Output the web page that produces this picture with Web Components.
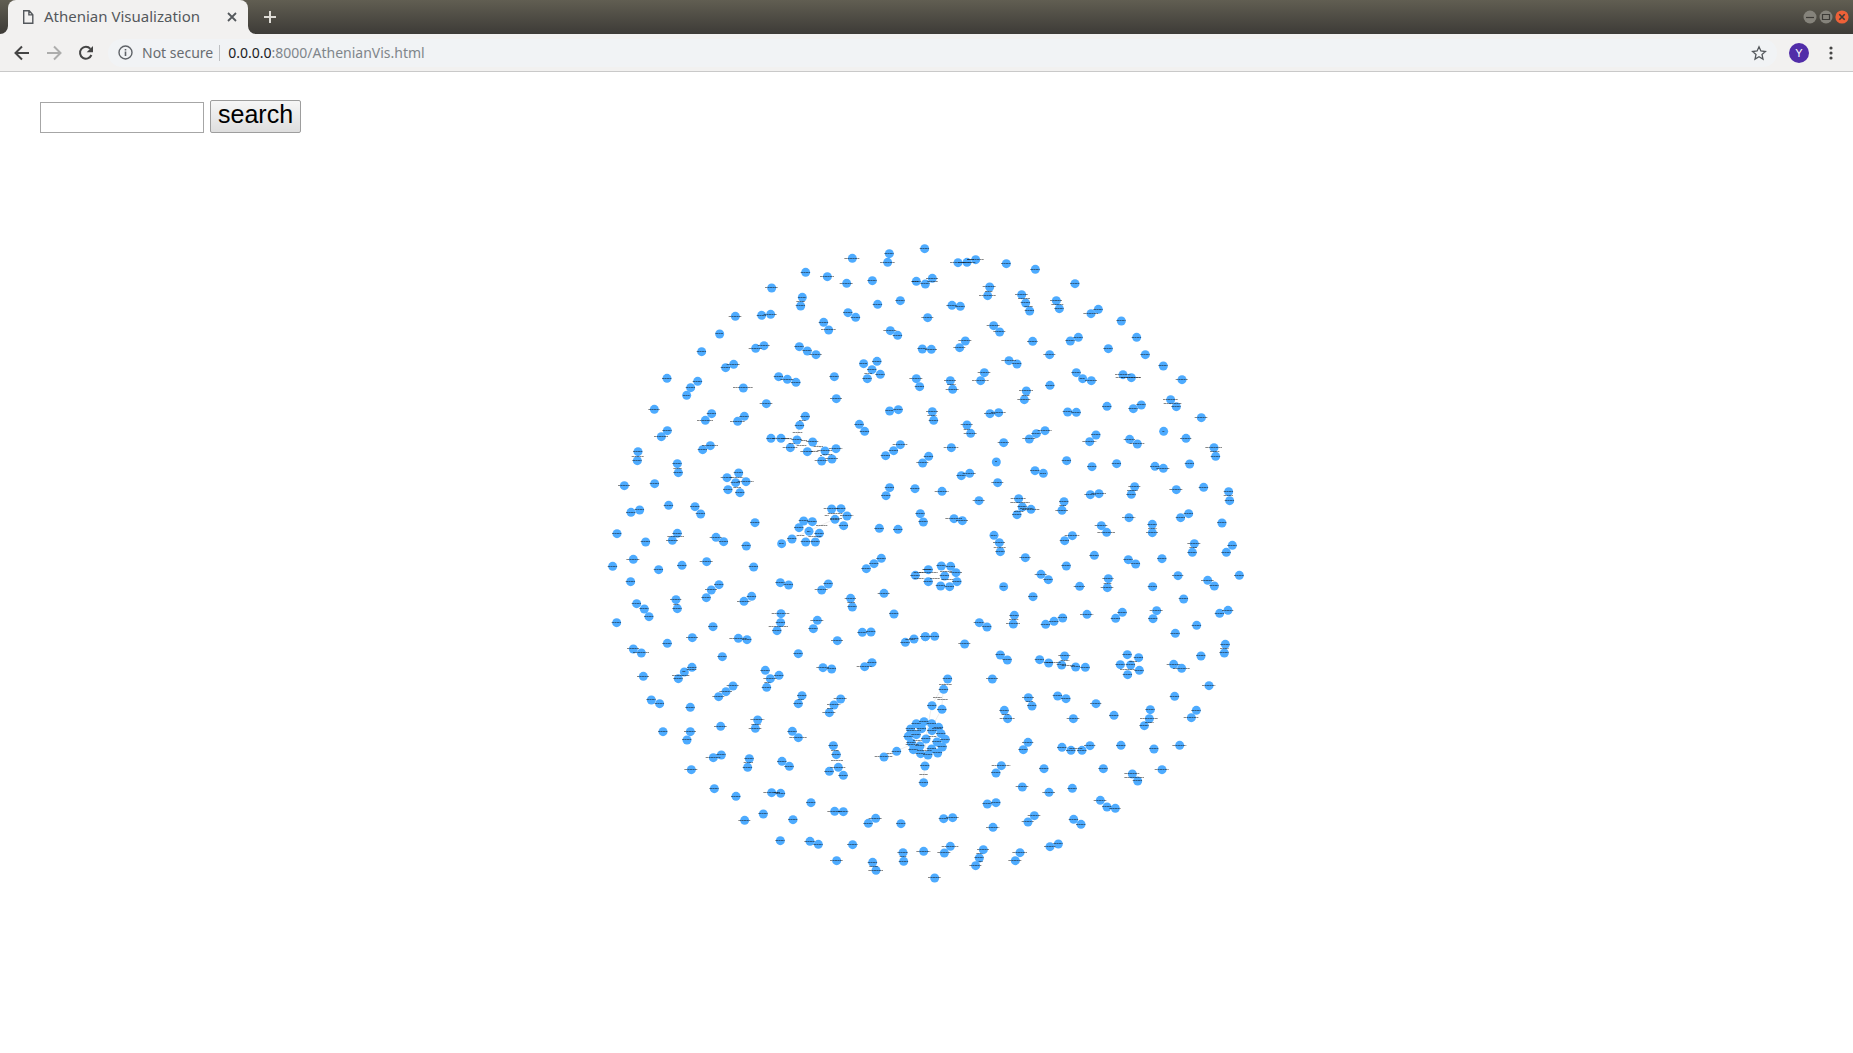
<!DOCTYPE html>
<html lang="en">
<head>
<meta charset="utf-8">
<title>Athenian Visualization</title>
<style>
html, body { margin: 0; height: 100%; background: #fff; }
body { display: flex; flex-direction: column; overflow: hidden; font-family: "Noto Sans", "Open Sans", sans-serif; }
page-view { flex: 1; }
</style>
</head>
<body>
<tab-strip><span>Athenian Visualization</span></tab-strip>
<browser-toolbar><span slot="host">0.0.0.0</span><span slot="path">:8000/AthenianVis.html</span></browser-toolbar>
<page-view><search-form></search-form><node-graph></node-graph></page-view>

<script>
class BaseElement extends HTMLElement {
  constructor() {
    super();
    this.attachShadow({ mode: 'open' }).innerHTML = this.constructor.markup;
  }
}

class TabStrip extends BaseElement {
  static markup = `
<style>
:host { display: flex; height: 34px; background: linear-gradient(#615e52, #3d3b37); color: #54585c; }
svg { display: block; flex: none; }
button { border: 0; padding: 0; background: none; display: flex; align-items: center; justify-content: center; }
.curve { align-self: flex-end; fill: #f2f1f0; }
.tab { box-sizing: border-box; width: 240px; height: 34px; padding: 0 9px 0 14px; background: #f2f1f0; border-radius: 8px 8px 0 0; display: flex; align-items: center; font-size: 15px; line-height: 20px; }
.title { flex: 1; padding: 0 0 2px 10px; white-space: nowrap; }
.new { width: 28px; }
.window { margin-left: auto; padding-right: 4px; display: flex; align-items: center; gap: 2px; }
.window button { width: 14px; height: 34px; }
</style>
<svg class="curve" width="8" height="8"><path d="M8 0v8H0a8 8 0 0 0 8-8z"/></svg>
<div class="tab">
  <svg width="12" height="16" viewBox="0 0 12 16" fill="none" stroke="#54585c" stroke-width="1.4"><path d="M1.7 1.7h5.5l3.6 4v8.6H1.7zM6.9 1.7v4.2h3.9"/></svg>
  <span class="title"><slot></slot></span>
  <button aria-label="Close tab"><svg width="14" height="14" viewBox="0 0 14 14" stroke="#54585c" stroke-width="1.8"><path d="M3 3l8 8M11 3l-8 8"/></svg></button>
</div>
<svg class="curve" width="8" height="8"><path d="M0 0v8h8a8 8 0 0 1-8-8z"/></svg>
<button class="new" aria-label="New tab"><svg width="14" height="14" viewBox="0 0 14 14" stroke="#dedcd6" stroke-width="2"><path d="M7 1v12M1 7h12"/></svg></button>
<div class="window">
  <button aria-label="Minimize"><svg width="14" height="14" viewBox="0 0 14 14"><circle cx="7" cy="7" r="6.5" fill="#85837b"/><path d="M3 7.5h8" stroke="#3c3b37" stroke-width="1.2"/></svg></button>
  <button aria-label="Maximize"><svg width="14" height="14" viewBox="0 0 14 14"><circle cx="7" cy="7" r="6.5" fill="#85837b"/><path d="M3.5 4.5h7v5h-7z" fill="none" stroke="#3c3b37" stroke-width="1.2"/></svg></button>
  <button aria-label="Close"><svg width="14" height="14" viewBox="0 0 14 14"><circle cx="7" cy="7" r="6.6" fill="#ee6138"/><path d="M4.3 4.3l5.4 5.4M9.7 4.3l-5.4 5.4" stroke="#3c3b37" stroke-width="1.6"/></svg></button>
</div>`;
}

class BrowserToolbar extends BaseElement {
  static markup = `
<style>
:host { display: flex; box-sizing: border-box; height: 38px; padding: 0 8px; align-items: center; background: #f2f1f0; border-bottom: 1px solid #c9c9c9; }
svg { display: block; flex: none; }
button { border: 0; padding: 0; background: none; width: 28px; height: 28px; display: flex; align-items: center; justify-content: center; flex: none; }
nav { display: flex; gap: 4px; }
.bar { flex: 1; box-sizing: border-box; height: 28px; margin: 0 8px; padding: 0 4px 0 10px; border-radius: 14px; background: #f1f3f5; display: flex; align-items: center; font-size: 14px; line-height: 20px; color: #686c70; white-space: nowrap; }
.note { padding: 0 6px 0 9px; }
.url { flex: 1; border-left: 1px solid #bdbfc2; height: 16px; line-height: 16px; padding-left: 8px; display: flex; align-items: center; outline: 0; }
.host { color: #202124; }
.path { color: #80868b; }
.avatar b { width: 20px; height: 20px; border-radius: 50%; background: #512da8; color: #fff; font-size: 11px; line-height: 20px; font-weight: 400; }
.menu { margin-left: 4px; }
</style>
<nav>
  <button aria-label="Back"><svg width="16" height="16" viewBox="0 0 16 16" fill="none" stroke="#454545" stroke-width="2"><path d="M15 8H2.5M8 1.5L1.5 8L8 14.5"/></svg></button>
  <button aria-label="Forward"><svg width="16" height="16" viewBox="0 0 16 16" fill="none" stroke="#adadac" stroke-width="2"><path d="M1 8h12.5M8 1.5L14.5 8L8 14.5"/></svg></button>
  <button aria-label="Reload"><svg width="16" height="16" viewBox="0 0 16 16"><path d="M13.4 10A5.9 5.9 0 1 1 12.4 3.9" fill="none" stroke="#454545" stroke-width="2"/><path d="M15 1v6.3H8.7z" fill="#454545"/></svg></button>
</nav>
<div class="bar">
  <svg width="15" height="15" viewBox="0 0 15 15"><circle cx="7.5" cy="7.5" r="6.5" fill="none" stroke="#5f6368" stroke-width="1.4"/><path d="M7.5 6.6v4.4M7.5 4v1.5" stroke="#5f6368" stroke-width="1.6"/></svg>
  <span class="note">Not secure</span>
  <div class="url" role="textbox" contenteditable="true" spellcheck="false" aria-label="Address"><span class="host"><slot name="host"></slot></span><span class="path"><slot name="path"></slot></span></div>
  <button aria-label="Bookmark"><svg width="16" height="16" viewBox="0 0 16 16"><path d="M8 1.8l1.9 4.2 4.5.5-3.4 3 1 4.6L8 11.8l-4 2.3 1-4.6-3.4-3 4.5-.5z" fill="none" stroke="#54585c" stroke-width="1.3"/></svg></button>
</div>
<button class="avatar" aria-label="Profile"><b>Y</b></button>
<button class="menu" aria-label="Menu"><svg width="4" height="14" viewBox="0 0 4 14" fill="#454545"><circle cx="2" cy="2" r="1.6"/><circle cx="2" cy="7" r="1.6"/><circle cx="2" cy="12" r="1.6"/></svg></button>`;
}

class PageView extends BaseElement {
  static markup = `
<style>:host { display: flex; flex-direction: column; min-height: 0; }</style>
<slot></slot>`;
}

class SearchForm extends BaseElement {
  static markup = `
<style>
:host { display: block; padding: 28px 40px 8px; font-family: "Liberation Sans", Arial, sans-serif; }
form { display: flex; align-items: flex-end; gap: 6px; height: 33px; margin: 0; }
input { box-sizing: border-box; width: 164px; height: 31px; border: 1px solid #a6a6a6; background: #fff; padding: 2px; font: 24px "Liberation Sans", sans-serif; outline: 0; }
button { box-sizing: border-box; height: 33px; padding: 0 7px 5px; border: 1px solid #9d9d9d; border-radius: 2px; background: linear-gradient(#f6f6f6, #dedede); color: #000; font: 25px/26px "Liberation Sans", sans-serif; }
</style>
<form onsubmit="return false"><input type="text" aria-label="Search term"><button>search</button></form>`;
}

/* Each sector has an origin and lists of "x,y[,halfLabelWidth]" in graph units (3 per CSS pixel). */
const SECTORS = [
  { at: [1800, 282],
    nodes: `756,69,23 867,55 862,81,22 616,111 681,124,21 739,144,20 816,136 514,158,19 606,186,12 601,212 405,243,19 484,240 511,237,20 358,296,12 304,349 670,261 685,284,22 743,232 766,246 832,207 900,196 948,138 870,286,20 892,300 466,339,20 491,331,18 376,397 400,387,20 597,334 621,347 647,358,18 790,385,12 830,378 815,403 840,417 801,430 200,429 292,438 271,457 259,480,10 535,424 561,432,20 587,441 702,424 429,458,30 708,490,18 498,505,19 162,522,17 334,535 315,555,24 432,543 412,558,22 948,430,20 958,454 868,527,12 894,523 777,567 793,588 201,586 183,604,21 330,631,24 307,643 900,628,22 880,646`,
    labels: `602,200,13 805,416,12 945,139,9` },
  { at: [2760, 282],
    nodes: `13,40 113,82,23 140,81 166,73,25 258,85,15 345,102 464,145 36,129,18 15,146 208,155,20 202,181,25 304,178,19 316,203 328,227 408,196,18 417,220 95,210,16 120,213 22,247,18 534,222 512,235,22 603,257 220,271,20 238,290,18 135,317,20 118,337,18 337,318,16 474,306 450,317 649,306 564,340 388,358,18 675,358 6,341 33,342,18 266,376,22 290,386 729,392 192,412,19 181,436,25 90,436,18 97,462,20 468,412 487,430,8 513,436,18 608,418,23 633,427,30 785,433,18 318,467,21 312,493,20 389,450 751,493,22 768,514 560,513 639,520 663,509 36,529,18 40,555 209,535,17 235,532,22 442,530 468,531 843,547,19 140,569,18 151,594,20 730,588,3 797,609,17 374,586,21 348,595 327,611,20 527,599 508,619,21 250,622,17 628,612,17 651,626,22`,
    labels: `206,168,11 312,190,18 326,214,13 412,208,18 94,448,13 317,480,12 758,505,27 36,542,14 625,427,38 140,582,9 38,139,16 152,73,10 140,82,26` },
  { at: [2250, 807],
    nodes: `165,18 148,45 62,84,13 92,84,25 140,89,16 187,95,18 120,112,22 171,124,20 224,122,22 257,115,20 245,146,19 214,152,20`,
    labels: `157,31,10 143,67,15 110,86,16 162,91,9 155,106,15 205,109,14 194,125,12 233,133,15 213,136,3 125,101,9`,
    links: `140,89,187,95 62,84,140,89 171,124,224,122 187,95,224,122 140,89,120,112 148,45,140,89` },
  { at: [1800, 912],
    nodes: `113,19 111,46 231,55 234,82 72,121,18 163,115 415,83 380,97,18 437,109,24 406,112 383,133 419,142 868,127 857,151 944,130 856,31 967,53,18 205,180 92,201 118,194 284,184 301,206 50,265 136,290 231,264,14 216,285,18 464,232 438,302 347,276,18 370,289 694,191,23 722,190 740,212,20 704,222 730,241 610,227 636,229 596,247 626,258,5 657,264 575,281 544,295,7 616,290 645,290 837,249 893,252 960,205 37,363 99,342,20 91,409 175,373 245,360 319,349,20 460,365 843,339 821,355 798,370 540,412 565,419 684,416 664,434,20 356,418 333,434,18 318,457 109,475 132,491 146,514 227,463,17 231,490 454,453 431,468,20 945,390 751,459,17 756,485 851,444,18 881,506 542,505,27 541,532 530,556 651,525,20 639,550 49,532 338,544 276,577,18 414,579,26 440,583 201,594 366,634 711,586,18 594,625 99,611,18 123,623,24 786,561 812,560 915,591 941,581 975,574`,
    labels: `113,34,18 233,70,13 410,97,20 412,126,12 227,274,25 705,205,22 708,219,18 665,241,17 602,272,12 645,274,20 680,212,6 535,544,29 229,478,9 754,472,12 957,382,16 957,400,16 930,584,14`,
    links: `626,258,704,222 544,295,626,258 694,191,704,222 596,247,626,258 616,290,626,258` },
  { at: [2760, 912],
    nodes: `93,7,22 881,7,25 886,33 228,50,3 439,46 515,64 589,55 704,63 729,69,20 808,56 25,33 123,91 148,84,20 344,76 369,84,9 232,112,18 65,138,21 176,166,18 643,124,18 633,147 768,133,20 850,126 510,148,17 536,145,22 925,139 928,166 295,160,23 306,185 332,192,26 290,208 431,169 425,195,19 626,217,20 805,205 781,217 696,237 696,262,18 905,233 101,220,25 126,226,18 9,230 543,241,19 559,261,27 456,271,22 433,286 221,270,9 237,292,18 240,319 822,295,20 816,321 936,300 918,321 315,337,17 522,330 438,362 624,343 646,356 725,340 63,362 91,363 24,373 107,382,19 73,392 24,409 110,409 61,422 88,424 362,387,18 384,403 250,424,9 478,423,17 564,400,17 561,427,19 697,424 773,391,17 862,405,19 882,422 957,390,15 338,454 790,461 282,510 279,536,21 177,532,16 200,545 427,518 401,528 376,537 500,507,20 606,501 586,519 709,496,20 698,520 923,495,17 898,504 829,540 765,564 15,574 43,573 133,596,18 240,629 261,644 358,643 433,632,18 621,628 655,637 915,597 912,623 842,632`,
    labels: `884,20,14 637,136,16 925,152,14 300,172,29 296,199,14 428,181,10 697,250,13 239,307,18 820,308,12 78,380,18 82,402,18 25,382,28 45,400,15 563,414,12 281,523,14 913,610,13 320,190,20 20,374,13` },
  { at: [1800, 1557],
    nodes: `129,48,18 275,21 252,35,5 234,55 495,30 536,45 510,55,20 499,81 668,22,19 694,26 815,7 793,19,23 398,77,18 377,94,19 355,109,18 605,106 594,130 721,116,20 701,134,20 687,157,20 153,119 178,130 270,141 361,198,19 188,214 270,214,18 260,239 472,179,21 465,204,19 576,213 594,232,26 363,284 339,292,22 447,295 442,321 545,303 567,318 273,328,20 699,256 708,283 714,321,23 687,333 729,345 342,385 407,408 514,397,24 541,399 632,427 703,453,21 729,454,16 489,461 433,480,18 578,478 826,474,20 804,489 902,490 540,541 629,543,16 654,552 757,553,16 709,601,19 817,606 827,630,22 908,577,16 910,603`,
    labels: `242,46,26 275,28,15 502,68,9 690,146,9 468,193,14 445,307,14 705,271,12 711,301,18 602,118,9 909,589,10 821,619,13 530,397,10` },
  { at: [2760, 1557],
    nodes: `385,8 424,14 466,20 495,21 600,13 631,14 657,30 622,43 760,12,20 784,24,25 216,56,18 866,76,20 324,112,18 335,137 412,107 437,115 252,150 262,175,23 459,175,19 527,130,17 581,165 763,108 828,150 813,172,22 690,148 687,175,27 672,196 323,246,17 309,268 425,261 452,270 485,270 509,256,17 602,255 701,266 778,255,21 243,316,28 227,338 371,325 549,325 636,341,23 652,362 725,328,21 306,380,19 386,396,19 456,384 540,420,19 560,440 585,444,17 201,431 227,427 342,466,19 323,485,18 460,477 482,492 70,475 97,472,19 218,501,20 10,573,21 90,558,25 72,578,20 189,568,18 177,593 166,616,18 299,577,22 285,601,20 414,551 389,559,17 43,653,19`,
    labels: `328,125,11 257,163,12 688,186,13 643,352,30 400,8,22 445,15,20 622,28,22 435,1,13 468,265,20 640,4,12 178,581,9 182,604,6` },
  { at: [2640, 1587],
    nodes: `202,26 190,57 155,106 185,117 131,154 108,160 154,160 91,176 124,175 175,171 155,181 182,190 84,198 108,193 195,207 137,206 93,217 170,215 186,230 119,227 99,238 154,236 172,248 121,250 143,254 49,243 11,260,27 134,287 130,337`,
    labels: `196,43,19 172,82,13 188,88,16 131,313,13 112,211,13 158,199,12 97,224,20 171,174,15 29,250,9 133,240,22 101,182,22`,
    links: `202,26,155,106 190,57,185,117 155,106,137,206 185,117,137,206 137,206,49,243 49,243,11,260 137,206,134,287 134,287,130,337` }
];

class NodeGraph extends BaseElement {
  static markup = `
<style>
:host { display: block; flex: 1; min-height: 0; }
svg { display: block; width: 100%; height: 100%; }
circle { fill: #4dabff; }
.link { stroke: #e4e4e4; stroke-width: 2; }
.tag { stroke: #111; stroke-opacity: .5; stroke-width: 3; stroke-dasharray: 8 1 5 1; }
</style>
<svg viewBox="0 0 5559 2736" role="img" aria-label="Network of people"></svg>`;
  connectedCallback() {
    const parse = text => (text || '').trim().split(/\s+/).filter(Boolean).map(p => p.split(',').map(Number));
    const row = y => Math.floor(y / 3) * 3 + 1.5;
    const tag = ([x, y, w = 14]) => `<path class="tag" d="M${x - w} ${row(y)}H${x + w}"/>`;
    this.shadowRoot.querySelector('svg').innerHTML = SECTORS.map(s => {
      const nodes = parse(s.nodes);
      return `<g transform="translate(${s.at})">` +
        parse(s.links).map(([a, b, c, d]) => `<path class="link" d="M${a} ${b}L${c} ${d}"/>`).join('') +
        nodes.map(([x, y]) => `<circle cx="${x + 1}" cy="${y + 1}" r="13.5"/>`).join('') +
        nodes.concat(parse(s.labels)).map(tag).join('') + '</g>';
    }).join('');
  }
}

customElements.define('tab-strip', TabStrip);
customElements.define('browser-toolbar', BrowserToolbar);
customElements.define('page-view', PageView);
customElements.define('search-form', SearchForm);
customElements.define('node-graph', NodeGraph);
</script>
</body>
</html>
